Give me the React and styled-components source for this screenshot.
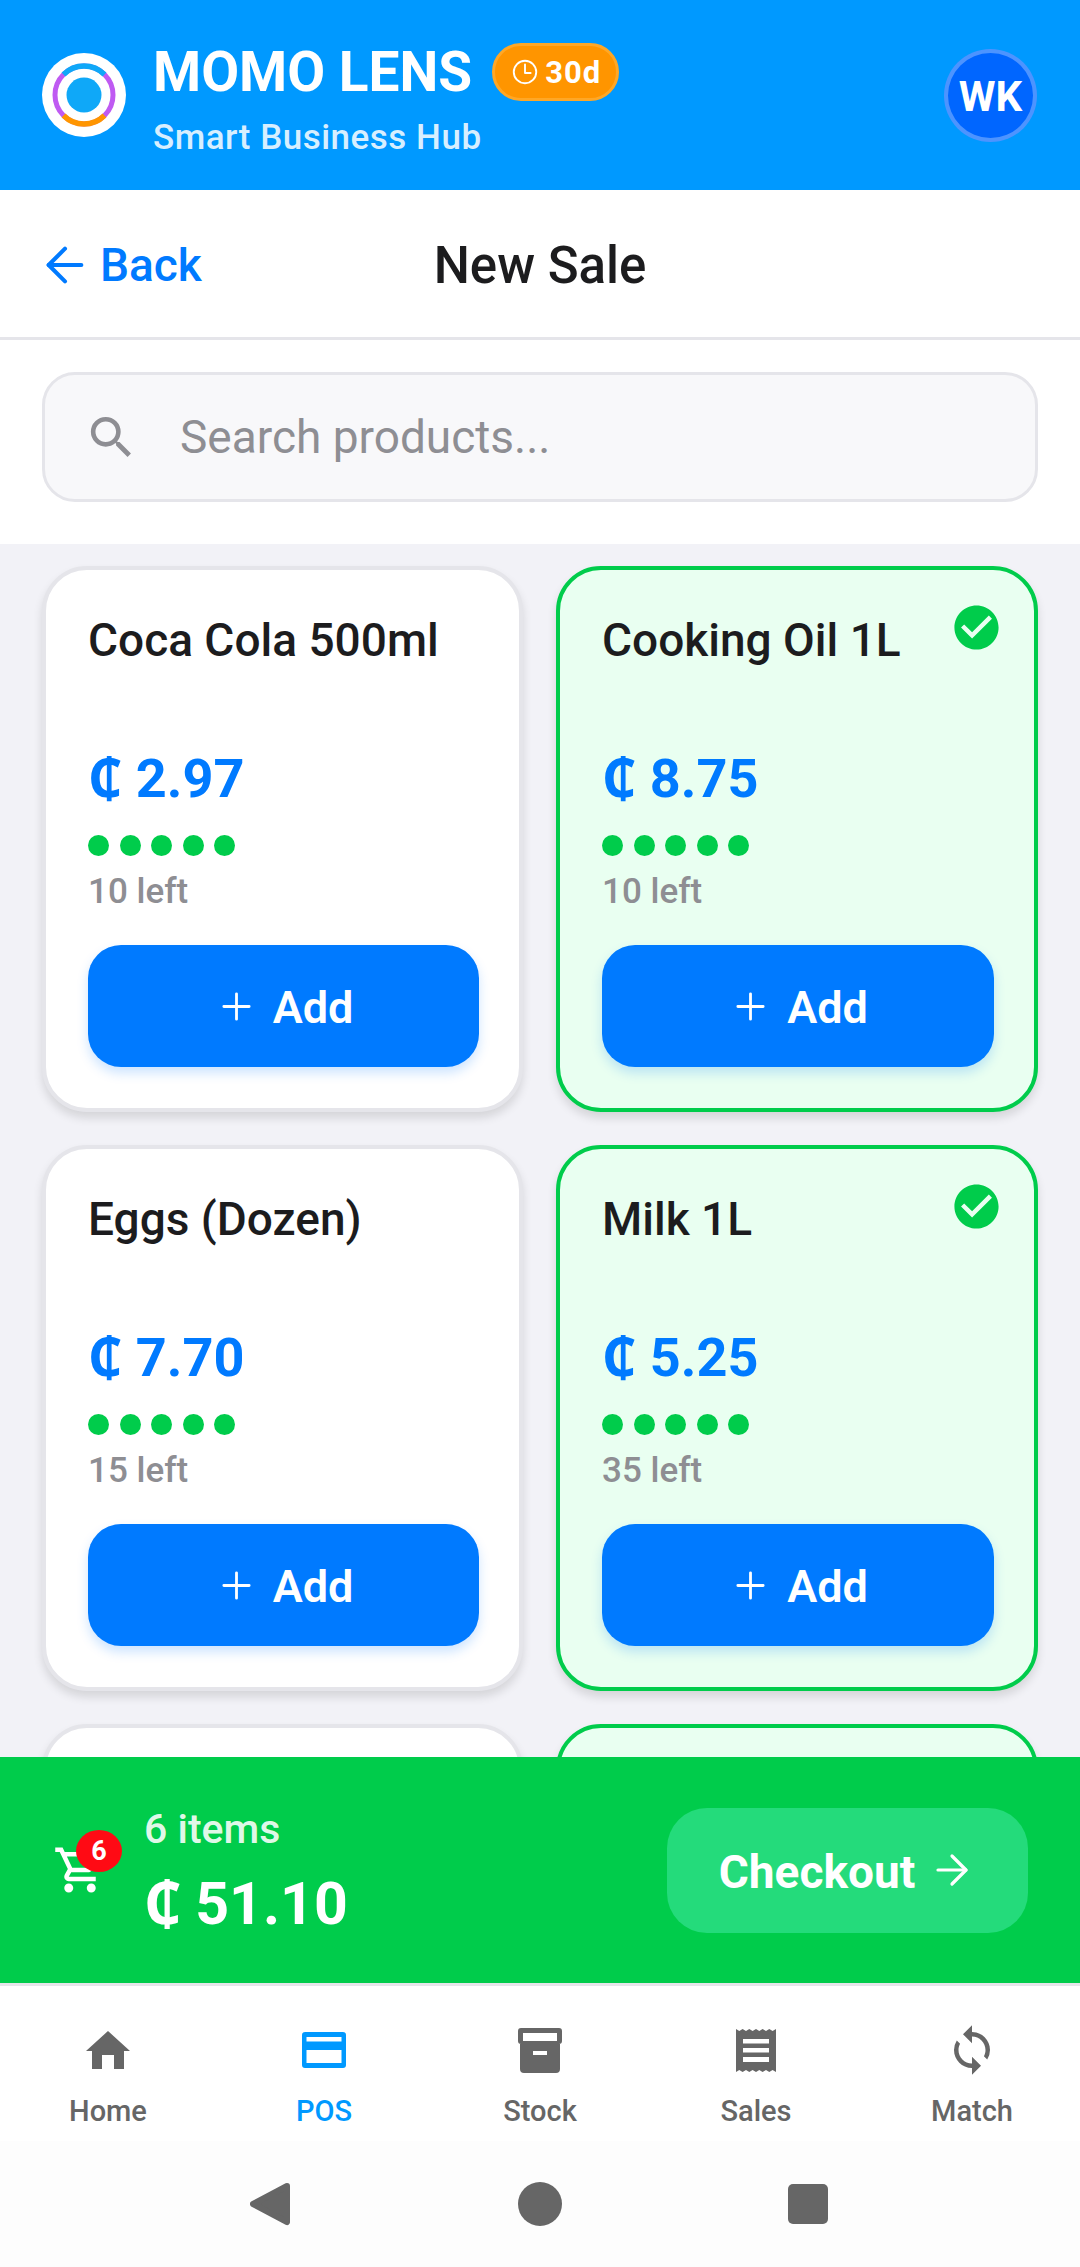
import styled, { createGlobalStyle } from "styled-components";
import { MdSync, MdOutlineShoppingCart, MdSearch, MdCheckCircle } from "react-icons/md";
import { IoTimeOutline, IoAdd } from "react-icons/io5";
import { ArrowLeft, ArrowRight } from "lucide-react";

const GlobalStyle = createGlobalStyle`
    * { box-sizing: border-box; }
    html, body { margin: 0; padding: 0; }
    body { font-family: Roboto, "Noto Sans", "Liberation Sans", sans-serif; background: #fff; }
`;

const products = [
    { name: "Coca Cola 500ml", price: "2.97", left: 10, selected: false },
    { name: "Cooking Oil 1L", price: "8.75", left: 10, selected: true },
    { name: "Eggs (Dozen)", price: "7.70", left: 15, selected: false },
    { name: "Milk 1L", price: "5.25", left: 35, selected: true },
];

const HomeIcon = () => (
    <svg width="44" height="38" viewBox="0 0 44 38" fill="currentColor">
        <path d="M22 0 L44 20 H38 V38 H28 V24 H16 V38 H6 V20 H0 Z" />
    </svg>
);

const CardIcon = () => (
    <svg width="44" height="36" viewBox="0 0 44 36" fill="currentColor">
        <path fillRule="evenodd" d="M3 0 H41 A3 3 0 0 1 44 3 V33 A3 3 0 0 1 41 36 H3 A3 3 0 0 1 0 33 V3 A3 3 0 0 1 3 0 Z M4.5 5 V9.5 H39.5 V5 Z M4.5 18 V31 H39.5 V18 Z" />
    </svg>
);

const StockIcon = () => (
    <svg width="44" height="45" viewBox="0 0 44 45" fill="currentColor">
        <path fillRule="evenodd" d="M3 0 H41 A3 3 0 0 1 44 3 V13 A3 3 0 0 1 41 16 H3 A3 3 0 0 1 0 13 V3 A3 3 0 0 1 3 0 Z M5 5 V13 H39 V5 Z" />
        <path fillRule="evenodd" d="M2 16 H42 V41 A4 4 0 0 1 38 45 H6 A4 4 0 0 1 2 41 Z M15 23 V27 H29 V23 Z" />
    </svg>
);

const SalesIcon = () => (
    <svg width="40" height="43" viewBox="0 0 40 43" fill="currentColor">
        <path fillRule="evenodd" d="M0 0 L3.3 2 L6.6 0 L10 2 L13.3 0 L16.6 2 L20 0 L23.3 2 L26.6 0 L30 2 L33.3 0 L36.6 2 L40 0 V43 L36.6 41 L33.3 43 L30 41 L26.6 43 L23.3 41 L20 43 L16.6 41 L13.3 43 L10 41 L6.6 43 L3.3 41 L0 43 Z M7 10 V14.5 H33 V10 Z M7 19 V23.5 H33 V19 Z M7 28 V33 H33 V28 Z" />
    </svg>
);

const navItems = [
    { label: "Home", icon: <HomeIcon /> },
    { label: "POS", icon: <CardIcon />, active: true },
    { label: "Stock", icon: <StockIcon /> },
    { label: "Sales", icon: <SalesIcon /> },
    { label: "Match", icon: <MdSync size={54} /> },
];

const Logo = () => (
    <LogoDisc>
        <svg width="64" height="64" viewBox="0 0 64 64">
            <circle cx="32" cy="32" r="29" fill="none" stroke="#BF5AF2" strokeWidth="5" />
            <path d="M11.5 11.5 A29 29 0 0 1 52.5 11.5" fill="none" stroke="#0FA8F8" strokeWidth="5.4" />
            <path d="M11.5 52.5 A29 29 0 0 0 52.5 52.5" fill="none" stroke="#FF9500" strokeWidth="5.4" />
            <circle cx="32" cy="32" r="17.5" fill="#0FA8F8" />
        </svg>
    </LogoDisc>
);

const ProductCard = ({ name, price, left, selected }) => (
    <Card $selected={selected}>
        {selected && <CheckMark><MdCheckCircle /></CheckMark>}
        <ProductName>{name}</ProductName>
        <Price>₵ {price}</Price>
        <Dots>{[0, 1, 2, 3, 4].map((i) => <Dot key={i} />)}</Dots>
        <LeftText>{left} left</LeftText>
        <AddButton><IoAdd /><span>Add</span></AddButton>
    </Card>
);

const App = () => {
    return (
        <Screen>
            <GlobalStyle />
            <Header>
                <Logo />
                <Brand>
                    <TitleRow>
                        <Title>MOMO LENS</Title>
                        <TrialBadge><IoTimeOutline /><span>30d</span></TrialBadge>
                    </TitleRow>
                    <Subtitle>Smart Business Hub</Subtitle>
                </Brand>
                <Avatar>WK</Avatar>
            </Header>

            <TopBar>
                <BackLink><ArrowLeft strokeWidth={1.75} /><span>Back</span></BackLink>
                <PageTitle>New Sale</PageTitle>
            </TopBar>

            <SearchArea>
                <SearchBox>
                    <MdSearch />
                    <SearchInput placeholder="Search products..." />
                </SearchBox>
            </SearchArea>

            <ProductList>
                {products.map((p) => <ProductCard key={p.name} {...p} />)}
                <Card />
                <Card $selected />
            </ProductList>

            <CheckoutBar>
                <CartIcon>
                    <MdOutlineShoppingCart />
                    <CartCount>6</CartCount>
                </CartIcon>
                <Totals>
                    <ItemCount>6 items</ItemCount>
                    <TotalAmount>₵ 51.10</TotalAmount>
                </Totals>
                <CheckoutButton><span>Checkout</span><ArrowRight strokeWidth={1.6} /></CheckoutButton>
            </CheckoutBar>

            <BottomNav>
                {navItems.map(({ label, icon, active }) => (
                    <NavItem key={label} $active={active}>
                        <NavIcon>{icon}</NavIcon>
                        <span>{label}</span>
                    </NavItem>
                ))}
            </BottomNav>

            <SystemBar>
                <svg width="44" height="48" viewBox="0 0 44 48">
                    <path d="M37 6 L3 24 L37 42 Z" fill="#666" stroke="#666" strokeWidth="6" strokeLinejoin="round" />
                </svg>
                <svg width="44" height="44" viewBox="0 0 44 44">
                    <circle cx="22" cy="22" r="22" fill="#666" />
                </svg>
                <svg width="44" height="40" viewBox="0 0 44 40">
                    <rect x="2" width="40" height="40" rx="5" fill="#666" />
                </svg>
            </SystemBar>
        </Screen>
    );
};

const Screen = styled.div`
    display: flex;
    flex-direction: column;
    width: 1080px;
    height: 2267px;
    overflow: hidden;
`;

const Header = styled.header`
    display: flex;
    align-items: center;
    flex: none;
    height: 190px;
    padding: 0 43px 0 42px;
    background: #0099ff;
`;
const LogoDisc = styled.div`
    display: flex;
    justify-content: center;
    align-items: center;
    flex: none;
    width: 84px;
    height: 84px;
    border-radius: 50%;
    background: #fff;
`;
const Brand = styled.div`
    display: flex;
    flex-direction: column;
    flex: 1;
    margin-left: 27px;
    padding-top: 10px;
`;
const TitleRow = styled.div`
    display: flex;
    align-items: center;
    gap: 20px;
`;
const Title = styled.div`
    font-size: 55px;
    font-weight: 700;
    line-height: 60px;
    color: #fff;
`;
const TrialBadge = styled.div`
    display: flex;
    align-items: center;
    gap: 5px;
    height: 58px;
    padding: 0 15px;
    border: 3px solid #ffa726;
    border-radius: 29px;
    background: #ff9500;
    color: #fff;
    font-size: 31px;
    font-weight: 700;
    letter-spacing: 1px;
    svg { width: 30px; height: 30px; }
`;
const Subtitle = styled.div`
    margin-top: 16px;
    font-size: 35px;
    font-weight: 500;
    line-height: 40px;
    letter-spacing: 0.5px;
    color: rgba(255, 255, 255, 0.85);
`;
const Avatar = styled.div`
    display: flex;
    justify-content: center;
    align-items: center;
    flex: none;
    width: 93px;
    height: 93px;
    padding-top: 2px;
    border: 4px solid rgba(255, 255, 255, 0.3);
    border-radius: 50%;
    background: #0066ff;
    color: #fff;
    font-size: 42px;
    font-weight: 700;
`;

const TopBar = styled.div`
    position: relative;
    display: flex;
    justify-content: center;
    align-items: center;
    flex: none;
    height: 150px;
    padding-top: 3px;
    border-bottom: 3px solid #e5e5ea;
    background: #fff;
`;
const BackLink = styled.div`
    position: absolute;
    left: 37px;
    display: flex;
    align-items: center;
    gap: 7px;
    color: #007aff;
    font-size: 46px;
    font-weight: 500;
    svg { width: 56px; height: 56px; }
`;
const PageTitle = styled.div`
    font-size: 51px;
    font-weight: 500;
    color: #1c1c1e;
`;

const SearchArea = styled.div`
    flex: none;
    padding: 32px 42px 42px;
    background: #fff;
`;
const SearchBox = styled.div`
    display: flex;
    align-items: center;
    gap: 39px;
    height: 130px;
    padding: 0 39px;
    border: 3px solid #e5e5ea;
    border-radius: 33px;
    background: #f8f8fa;
    svg { flex: none; width: 55px; height: 55px; color: #8e8e93; }
`;
const SearchInput = styled.input`
    flex: 1;
    border: none;
    outline: none;
    background: transparent;
    font-family: inherit;
    font-size: 46px;
    color: #1c1c1e;
    &::placeholder { color: #8e8e93; opacity: 1; }
`;

const ProductList = styled.div`
    display: grid;
    grid-template-columns: 481px 482px;
    grid-auto-rows: 546px;
    gap: 33px;
    flex: 1;
    min-height: 0;
    overflow: hidden;
    padding: 22px 42px;
    background: #f2f2f7;
`;
const Card = styled.div`
    position: relative;
    display: flex;
    flex-direction: column;
    padding: 44px 40px 30px 42px;
    border: 4px solid ${(p) => (p.$selected ? "#00cc4b" : "#e5e5ea")};
    border-radius: 45px;
    background: ${(p) => (p.$selected ? "#e9fff1" : "#fff")};
    box-shadow: 0 6px 10px rgba(0, 0, 0, 0.12);
`;
const CheckMark = styled.div`
    position: absolute;
    top: 31px;
    right: 31px;
    display: flex;
    color: #00cc4b;
    svg { width: 53px; height: 53px; }
`;
const ProductName = styled.div`
    height: 135px;
    font-size: 46px;
    font-weight: 500;
    line-height: 52px;
    color: #1c1c1e;
`;
const Price = styled.div`
    font-size: 54px;
    font-weight: 700;
    line-height: 60px;
    color: #007aff;
`;
const Dots = styled.div`
    display: flex;
    gap: 10.5px;
    margin-top: 26px;
`;
const Dot = styled.div`
    width: 21px;
    height: 21px;
    border-radius: 50%;
    background: #00cc4b;
`;
const LeftText = styled.div`
    margin-top: 15px;
    font-size: 35px;
    font-weight: 500;
    line-height: 42px;
    color: #8e8e93;
`;
const AddButton = styled.div`
    display: flex;
    justify-content: center;
    align-items: center;
    gap: 14px;
    height: 122px;
    margin-top: 32px;
    border-radius: 33px;
    background: #007aff;
    box-shadow: 0 6px 12px rgba(0, 122, 255, 0.2);
    color: #fff;
    font-size: 45px;
    font-weight: 600;
    span { margin-top: 3px; }
    svg { width: 45px; height: 45px; }
`;

const CheckoutBar = styled.div`
    display: flex;
    align-items: center;
    flex: none;
    height: 226px;
    padding: 0 52px 0 53px;
    background: #00cc4b;
`;
const CartIcon = styled.div`
    position: relative;
    display: flex;
    flex: none;
    color: #fff;
    svg { width: 54px; height: 54px; }
`;
const CartCount = styled.div`
    position: absolute;
    top: -13px;
    right: -15px;
    display: flex;
    justify-content: center;
    align-items: center;
    width: 46px;
    height: 42px;
    border-radius: 50%;
    background: #ff0a14;
    color: #fff;
    font-size: 27px;
    font-weight: 700;
`;
const Totals = styled.div`
    display: flex;
    flex-direction: column;
    flex: 1;
    margin-left: 37px;
    padding-top: 4px;
    color: #fff;
`;
const ItemCount = styled.div`
    font-size: 41px;
    font-weight: 500;
    line-height: 48px;
    color: rgba(255, 255, 255, 0.9);
`;
const TotalAmount = styled.div`
    margin-top: 15px;
    font-size: 59px;
    font-weight: 700;
    line-height: 72px;
    word-spacing: -1px;
`;
const CheckoutButton = styled.div`
    display: flex;
    justify-content: center;
    align-items: center;
    gap: 13px;
    flex: none;
    width: 361px;
    height: 125px;
    border-radius: 40px;
    background: #24db7b;
    color: #fff;
    font-size: 46px;
    font-weight: 700;
    span { margin-top: 4px; }
    svg { width: 48px; height: 48px; }
`;

const BottomNav = styled.nav`
    display: grid;
    grid-template-columns: repeat(5, 1fr);
    flex: none;
    height: 158px;
    padding-top: 37px;
    border-top: 3px solid #e5e5ea;
    background: #fff;
`;
const NavItem = styled.div`
    display: flex;
    flex-direction: column;
    align-items: center;
    gap: 17px;
    color: ${(p) => (p.$active ? "#0099ff" : "#666")};
    font-size: 29px;
    font-weight: 500;
`;
const NavIcon = styled.div`
    display: flex;
    justify-content: center;
    align-items: center;
    height: 54px;
`;

const SystemBar = styled.div`
    display: flex;
    justify-content: center;
    align-items: center;
    gap: 224px;
    flex: none;
    height: 126px;
    background: #fdfdfd;
`;

export default App;
